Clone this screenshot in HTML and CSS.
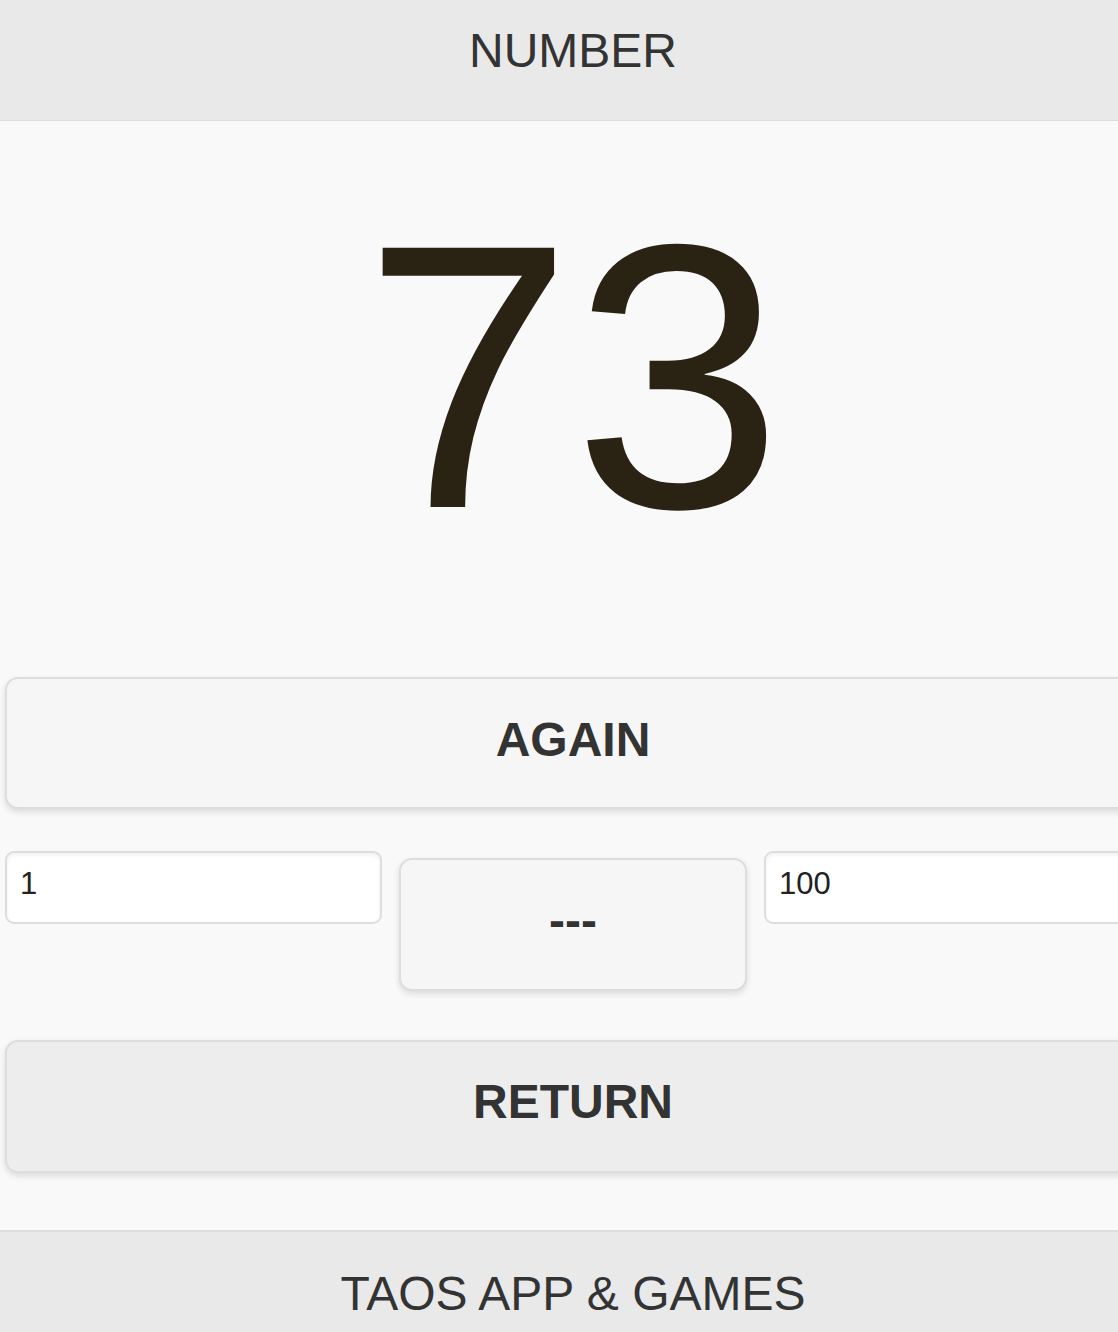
FILE: index.html
```html
<!DOCTYPE html>
<html lang="en">
<head>
<meta charset="utf-8">
<title>NUMBER</title>
<link rel="stylesheet" href="styles.css">
</head>
<body>
<div class="page">
  <header class="bar header"><h1 class="bar-title">NUMBER</h1></header>
  <main class="content">
    <div class="result">73</div>
    <button class="btn btn-again">AGAIN</button>
    <div class="range">
      <input class="field" type="text" value="1">
      <button class="btn btn-sep">---</button>
      <input class="field" type="text" value="100">
    </div>
    <button class="btn btn-return">RETURN</button>
  </main>
  <footer class="bar footer"><h2 class="bar-title">TAOS APP &amp; GAMES</h2></footer>
</div>
</body>
</html>
```
FILE: styles.css
```css
html, body {
  margin: 0;
  padding: 0;
  overflow: hidden;
  background: #f9f9f9;
}
body {
  font-family: "Liberation Sans", Arial, Helvetica, sans-serif;
  color: #333;
}
.page {
  width: 1146px;
  background: #f9f9f9;
}
.bar {
  background: #e9e9e9;
  text-align: center;
}
.header {
  height: 121px;
  box-sizing: border-box;
  padding-top: 23px;
  border-bottom: 1px solid #dddddd;
}
.footer {
  height: 130px;
  box-sizing: border-box;
  padding-top: 34px;
  border-top: 2px solid #dddddd;
}
.bar-title {
  margin: 0;
  font-size: 48px;
  font-weight: normal;
  line-height: normal;
  color: #333;
}
.content {
  padding: 67px 5px 57px 5px;
}
.result {
  font-size: 377px;
  line-height: 377px;
  height: 377px;
  text-align: center;
  color: #2a2213;
  margin-bottom: 112px;
}
.btn {
  display: flex;
  align-items: center;
  justify-content: center;
  box-sizing: border-box;
  border: 2px solid #dddddd;
  border-radius: 13px;
  background: #f6f6f6;
  color: #333;
  font-family: "Liberation Sans", Arial, Helvetica, sans-serif;
  font-weight: bold;
  font-size: 48px;
  padding: 0;
  box-shadow: 0 3px 6px rgba(0, 0, 0, 0.12);
}
.btn-again {
  width: 1136px;
  height: 132px;
  padding-bottom: 8px;
}
.range {
  display: flex;
  align-items: flex-start;
  gap: 17px;
  margin-top: 42px;
}
.field {
  width: 377px;
  height: 73px;
  box-sizing: border-box;
  margin: 0;
  padding: 13px 11px 20px 13px;
  border: 2px solid #dddddd;
  border-radius: 9px;
  background: #ffffff;
  font-family: "Liberation Sans", Arial, Helvetica, sans-serif;
  font-size: 31px;
  line-height: 36px;
  color: #222;
  box-shadow: inset 0 2px 4px rgba(0, 0, 0, 0.06);
  outline: none;
}
.btn-sep {
  width: 348px;
  height: 133px;
  margin-top: 7px;
  flex: none;
  padding-bottom: 8px;
}
.btn-return {
  width: 1136px;
  height: 133px;
  margin-top: 49px;
  background: #ededed;
  padding-bottom: 10px;
}
```
